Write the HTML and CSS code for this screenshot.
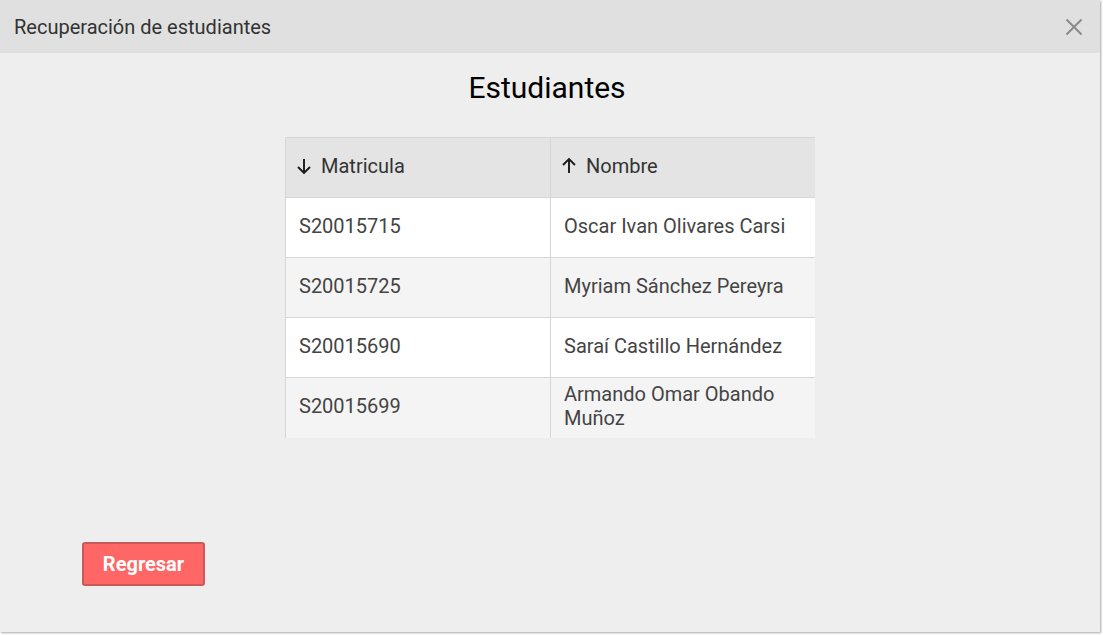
FILE: index.html
```html
<!DOCTYPE html>
<html lang="es">
<head>
<meta charset="utf-8">
<title>Recuperación de estudiantes</title>
<link rel="stylesheet" href="styles.css">
</head>
<body>
<div class="dialog">
  <div class="dialog-header">
    <span class="dialog-title">Recuperación de estudiantes</span>
    <button class="close" aria-label="Cerrar">
      <svg width="18" height="18" viewBox="0 0 18 18"><path d="M1.5 1.5L16.5 16.5M16.5 1.5L1.5 16.5" stroke="#8a8a8a" stroke-width="2" fill="none"/></svg>
    </button>
  </div>
  <div class="dialog-body">
    <h1 class="heading">Estudiantes</h1>
    <div class="table-wrap">
      <table class="grid">
        <thead>
          <tr>
            <th><span class="sort">
              <svg width="18" height="18" viewBox="0 0 18 18"><path d="M9 2V16M3 10L9 16L15 10" stroke="#1a1a1a" stroke-width="1.9" fill="none"/></svg>
            </span>Matricula</th>
            <th><span class="sort">
              <svg width="18" height="18" viewBox="0 0 18 18"><path d="M9 16V2M3 8L9 2L15 8" stroke="#1a1a1a" stroke-width="1.9" fill="none"/></svg>
            </span>Nombre</th>
          </tr>
        </thead>
        <tbody>
          <tr><td>S20015715</td><td>Oscar Ivan Olivares Carsi</td></tr>
          <tr class="alt"><td>S20015725</td><td>Myriam Sánchez Pereyra</td></tr>
          <tr><td>S20015690</td><td>Saraí Castillo Hernández</td></tr>
          <tr class="alt"><td>S20015699</td><td>Armando Omar Obando Muñoz</td></tr>
        </tbody>
      </table>
    </div>
    <div class="actions">
      <button class="btn-back">Regresar</button>
    </div>
  </div>
</div>
</body>
</html>
```

FILE: styles.css
```css
html, body {
  margin: 0;
  padding: 0;
  background: #ffffff;
}
body {
  font-family: Roboto, "Liberation Sans", sans-serif;
  width: 1103px;
  height: 635px;
  overflow: hidden;
}
.dialog {
  width: 1100px;
  height: 632px;
  background: #eeeeee;
  box-shadow: 1px 1px 2px rgba(0,0,0,0.35);
  display: flex;
  flex-direction: column;
}
.dialog-header {
  height: 53px;
  background: #e0e0e0;
  display: flex;
  align-items: center;
  justify-content: space-between;
  padding: 0 17px 0 14px;
  box-sizing: border-box;
}
.dialog-title {
  font-size: 20px;
  color: #333333;
  padding-top: 1px;
}
.close {
  background: none;
  border: none;
  padding: 0;
  width: 18px;
  height: 18px;
  cursor: pointer;
}
.close svg {
  display: block;
}
.dialog-body {
  flex: 1;
  display: flex;
  flex-direction: column;
}
.heading {
  margin: 16px 0 0;
  padding-right: 6px;
  font-size: 30px;
  font-weight: 400;
  text-align: center;
  color: #000000;
  line-height: 38px;
}
.table-wrap {
  margin: 30px 0 0 285px;
  width: 530px;
  overflow: hidden;
}
.grid {
  border-collapse: collapse;
  width: 531px;
  table-layout: fixed;
  font-size: 20px;
  color: #444444;
}
.grid th, .grid td {
  border: 1px solid #d6d6d6;
  height: 60px;
  padding: 0 13px 3px;
  text-align: left;
  box-sizing: border-box;
  line-height: 24px;
}
.grid th {
  background: #e4e4e4;
  font-weight: 400;
  color: #333333;
}
.grid tbody tr:last-child td {
  border-bottom: none;
}
.grid td {
  background: #ffffff;
}
.grid tr.alt td {
  background: #f4f4f4;
}
.sort {
  display: inline-block;
  vertical-align: -2px;
  margin-right: 8px;
  margin-left: -4px;
}
.sort svg {
  display: block;
}
.actions {
  margin-top: auto;
  padding: 0 0 46px 82px;
}
.btn-back {
  width: 123px;
  height: 44px;
  background: #ff6666;
  border: 2px solid #c85a5a;
  border-radius: 3px;
  color: #ffffff;
  font-family: Roboto, "Liberation Sans", sans-serif;
  font-size: 20px;
  font-weight: 700;
  cursor: pointer;
}
```
